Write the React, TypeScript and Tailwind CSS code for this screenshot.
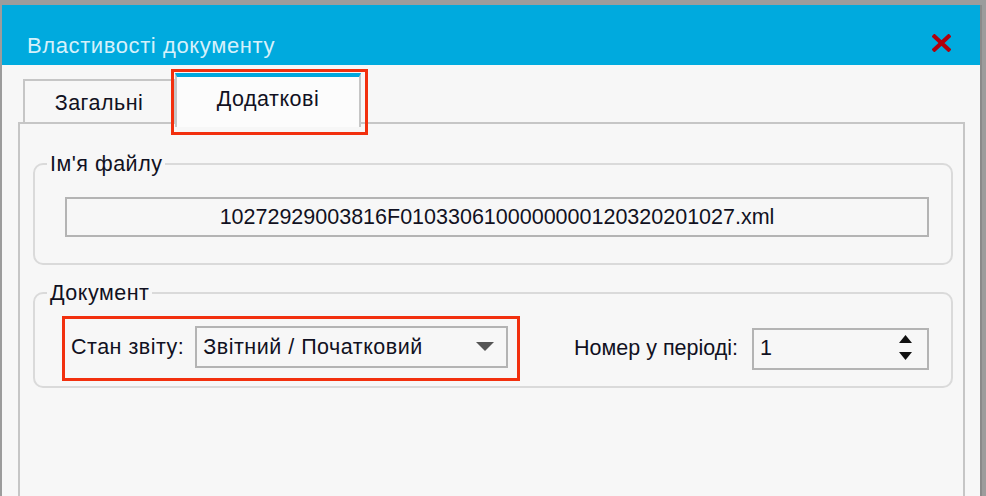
import React from 'react';

const font = { fontFamily: '"Liberation Sans", Arial, sans-serif' };

function CloseIcon() {
  return (
    <svg width="19" height="18" viewBox="0 0 19 18" className="block">
      <path d="M2.5 2.5 L16.5 15.5 M16.5 2.5 L2.5 15.5" stroke="#b0000c" strokeWidth="4.2" strokeLinecap="square" />
    </svg>
  );
}

function Group({ title, children, className }: { title: string; children: React.ReactNode; className?: string }) {
  return (
    <fieldset className={'border-2 border-[#dadada] rounded-[10px] ' + (className ?? '')}>
      <legend className="ml-[12px] px-[3px] leading-[24px] text-[#111122]">{title}</legend>
      {children}
    </fieldset>
  );
}

export default function App() {
  return (
    <div
      className="w-[986px] h-[496px] overflow-hidden bg-[#9c9c9c] pt-[5px] pl-[2px] pr-[4px] text-[21.5px] tracking-[0.5px]"
      style={font}
    >
      <div className="h-full flex flex-col bg-[#f7f7f7] border-r-2 border-[#8a8a8a]">
        {/* title bar */}
        <div className="h-[60px] shrink-0 bg-[#00aade] flex items-start justify-between pl-[25px] pr-[29px]">
          <span className="pt-[29px] leading-[24px] text-[22px] tracking-[0.6px] text-[#d6f1fb]">Властивості документу</span>
          <span className="pt-[29px]">
            <CloseIcon />
          </span>
        </div>

        <div className="flex-1 pl-[16px] pr-[15px] pt-[8px]">
          {/* tabs */}
          <div className="flex items-end pl-[5px] h-[49px]">
            <div className="w-[152px] h-[43px] border-2 border-b-0 border-[#c6c6c6] flex items-center justify-center pt-[3px] text-[#111122]">
              Загальні
            </div>
            <div className="relative z-10 -mb-[5px] w-[186px] h-[54px] bg-[#fcfcfc] border-x-2 border-[#c6c6c6] border-t-[4px] border-t-[#00a8de] flex items-center justify-center pb-[6px] text-[#111122]">
              Додаткові
              <div className="absolute -left-[6px] -right-[9px] -top-[8px] -bottom-[8px] border-[3px] border-[#f2300e]" />
            </div>
          </div>

          {/* panel */}
          <div className="h-[400px] border-2 border-[#c6c6c6] pl-[13px] pr-[10px] pt-[28px]">
            <Group title="Ім'я файлу" className="pb-[26px]">
              <div className="pl-[30px] pr-[22px] mt-[21px]">
                <div className="h-[40px] border-2 border-[#b4b4b4] flex items-center justify-center tracking-normal text-[#111122]">
                  10272929003816F0103306100000000120320201027.xml
                </div>
              </div>
            </Group>

            <Group title="Документ" className="mt-[16px] pb-[5px]">
              <div className="pl-[27px] pr-[22px] mt-[11px] flex items-center">
                <div className="flex items-center border-[3px] border-[#f2300e] pl-[6px] pr-[9px] pt-[7px] pb-[10px]">
                  <span className="text-[#111122]">Стан звіту:</span>
                  <div className="ml-[11px] w-[313px] h-[42px] border-2 border-[#b4b4b4] flex items-center justify-between pl-[6px] pr-[12px] text-[#111122]">
                    <span>Звітний / Початковий</span>
                    <svg width="18" height="10" viewBox="0 0 18 10" className="block">
                      <path d="M0 0 H18 L9 9 Z" fill="#555555" />
                    </svg>
                  </div>
                </div>
                <div className="ml-auto flex items-center">
                  <span className="tracking-normal text-[#111122]">Номер у періоді:</span>
                  <div className="ml-[14px] w-[177px] h-[42px] border-2 border-[#b4b4b4] flex items-center justify-between pl-[6px] pr-[15px] text-[#111122]">
                    <span>1</span>
                    <svg width="13" height="27" viewBox="0 0 13 27" className="block">
                      <path d="M6.5 0 L13 8 H0 Z" fill="#111111" />
                      <path d="M0 17 H13 L6.5 25 Z" fill="#111111" />
                    </svg>
                  </div>
                </div>
              </div>
            </Group>
          </div>
        </div>
      </div>
    </div>
  );
}
